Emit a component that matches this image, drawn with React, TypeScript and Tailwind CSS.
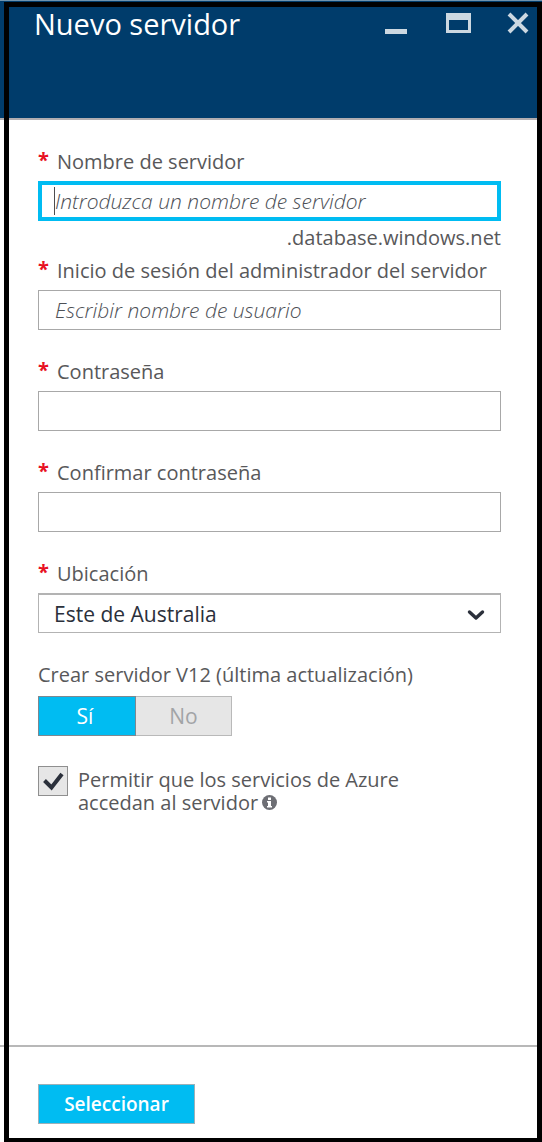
import { useState, type ReactNode } from "react";

type FieldProps = {
  id: string;
  label: string;
  children: ReactNode;
  hint?: string;
};

function Field({ id, label, children, hint }: FieldProps) {
  return (
    <div className={hint ? "" : "mb-[26px]"}>
      <label htmlFor={id} className="mb-[3px] flex text-[20px] leading-8 text-[#58585a]">
        <span aria-hidden="true" className="w-[19px] leading-7 font-bold text-[#e81123]">*</span>
        {label}
      </label>
      {children}
      {hint && <p className="text-right text-[20px] leading-[34px] text-[#58585a]">{hint}</p>}
    </div>
  );
}

const boxClass =
  "block h-10 w-full border border-[#a8a8a8] bg-white px-4 text-[21px] font-light text-[#2b303b] outline-none placeholder:text-[#4d5056] placeholder:italic placeholder:opacity-100";

export default function App() {
  const [v12, setV12] = useState(true);

  return (
    <div className="flex min-h-screen flex-col border-t border-[#6f93ad] bg-white font-['Open_Sans',sans-serif] font-normal">
      <div className="h-px bg-[#003c6b]" />
      <div className="flex flex-1">
        <div aria-hidden="true" className="flex w-1 flex-col">
          <div className="h-[118px] border-b-2 border-[#b0adb0] bg-[#003c6b]" />
          <div className="flex-1" />
          <div className="h-[97px] border-t-2 border-[#b8b8b8]" />
        </div>
        <main className="flex flex-1 flex-col border-5 border-b-4 border-black">
          <header className="flex h-[113px] items-start justify-between border-b-2 border-[#b0adb0] bg-[#003c6b] pr-2 pl-[25px]">
            <h1 className="text-[29px] leading-[34px] text-white">Nuevo servidor</h1>
            <div className="flex items-center gap-9 pt-1">
              <button type="button" aria-label="Minimizar">
                <svg width="23" height="24" viewBox="0 0 23 24" fill="#ccd8e1">
                  <rect x="0" y="18" width="22" height="5" />
                </svg>
              </button>
              <button type="button" aria-label="Maximizar">
                <svg width="27" height="24" viewBox="0 0 27 24" fill="#ccd8e1">
                  <path fillRule="evenodd" d="M2 2h25v20H2zM5 9v10h19V9z" />
                </svg>
              </button>
              <button type="button" aria-label="Cerrar">
                <svg width="22" height="24" viewBox="0 0 22 24" fill="none" stroke="#ccd8e1" strokeWidth="4">
                  <path d="M2 3l18 18M20 3L2 21" />
                </svg>
              </button>
            </div>
          </header>

          <form className="flex-1 pt-[26px] pr-9 pl-[29px]">
            <Field id="server" label="Nombre de servidor" hint=".database.windows.net">
              <div className="relative">
                <input
                  id="server"
                  type="text"
                  placeholder="Introduzca un nombre de servidor"
                  className="block h-10 w-full border-4 border-[#00bcf2] bg-white px-[13px] text-[21px] font-light text-[#2b303b] outline-none placeholder:text-[#4d5056] placeholder:italic placeholder:opacity-100"
                />
                <span aria-hidden="true" className="absolute top-[6px] left-4 h-7 w-px bg-[#4d4d4f]" />
              </div>
            </Field>
            <Field id="admin" label="Inicio de sesión del administrador del servidor">
              <input id="admin" type="text" placeholder="Escribir nombre de usuario" className={boxClass} />
            </Field>
            <Field id="password" label="Contraseña">
              <input id="password" type="password" className={boxClass} />
            </Field>
            <Field id="confirm" label="Confirmar contraseña">
              <input id="confirm" type="password" className={boxClass} />
            </Field>
            <Field id="location" label="Ubicación">
              <div className="relative">
                <select
                  id="location"
                  className="block h-10 w-full appearance-none border border-t-2 border-[#b3b3b3] bg-white px-[15px] pt-[2px] text-[21px] text-[#2b303b] outline-none"
                >
                  <option>Este de Australia</option>
                </select>
                <svg
                  className="pointer-events-none absolute top-4 right-4"
                  width="18"
                  height="12"
                  viewBox="0 0 18 12"
                  fill="none"
                  stroke="#2b303b"
                  strokeWidth="3.4"
                  strokeLinecap="round"
                  strokeLinejoin="round"
                >
                  <path d="M2.500 3L9 9l6.500-6" />
                </svg>
              </div>
            </Field>

            <fieldset className="mb-[30px]">
              <legend className="mb-[5px] text-[20px] leading-8 text-[#58585a]">
                Crear servidor V12 (última actualización)
              </legend>
              <div className="flex text-[21px]">
                <button
                  type="button"
                  aria-pressed={v12}
                  onClick={() => setV12(true)}
                  className="h-10 w-[98px] border border-[#7d8890] bg-[#00bcf2] pt-px pr-1 text-white"
                >
                  Sí
                </button>
                <button
                  type="button"
                  aria-pressed={!v12}
                  onClick={() => setV12(false)}
                  className="h-10 w-24 border border-l-0 border-[#b9b9b9] bg-[#e6e6e6] pt-px text-[#a2a4a6]"
                >
                  No
                </button>
              </div>
            </fieldset>

            <div className="flex gap-[10px]">
              <span className="relative h-[30px] w-[30px] shrink-0">
                <input
                  id="allow"
                  type="checkbox"
                  defaultChecked
                  className="peer block h-[30px] w-[30px] appearance-none border border-[#8f8f8f] bg-[#e6e6e6]"
                />
                <svg
                  className="pointer-events-none absolute inset-0 hidden peer-checked:block"
                  width="30"
                  height="30"
                  viewBox="0 0 30 30"
                  fill="none"
                  stroke="#2b303b"
                  strokeWidth="4"
                >
                  <path d="M6.500 14.500l7 7L24 8" />
                </svg>
              </span>
              <label htmlFor="allow" className="w-[340px] pt-[2px] text-[20px] leading-[23px] text-[#58585a]">
                Permitir que los servicios de Azure
                <br />
                accedan al servidor
                <svg className="ml-1 inline-block align-baseline" width="15" height="15" viewBox="0 0 15 15">
                  <circle cx="7.5" cy="7.5" r="7.5" fill="#6d6e74" />
                  <path d="M6 2.500h3V5H6zM5 6h4v5h1v1.500H5V11h1V7.500H5z" fill="#fff" />
                </svg>
              </label>
            </div>
          </form>

          <footer className="h-[93px] border-t-2 border-[#b8b8b8] pt-[37px] pl-[29px]">
            <button
              type="button"
              className="h-10 w-[157px] border border-[#9bb0b8] bg-[#00bcf2] text-[19px] font-semibold text-white"
            >
              Seleccionar
            </button>
          </footer>
        </main>
      </div>
    </div>
  );
}
